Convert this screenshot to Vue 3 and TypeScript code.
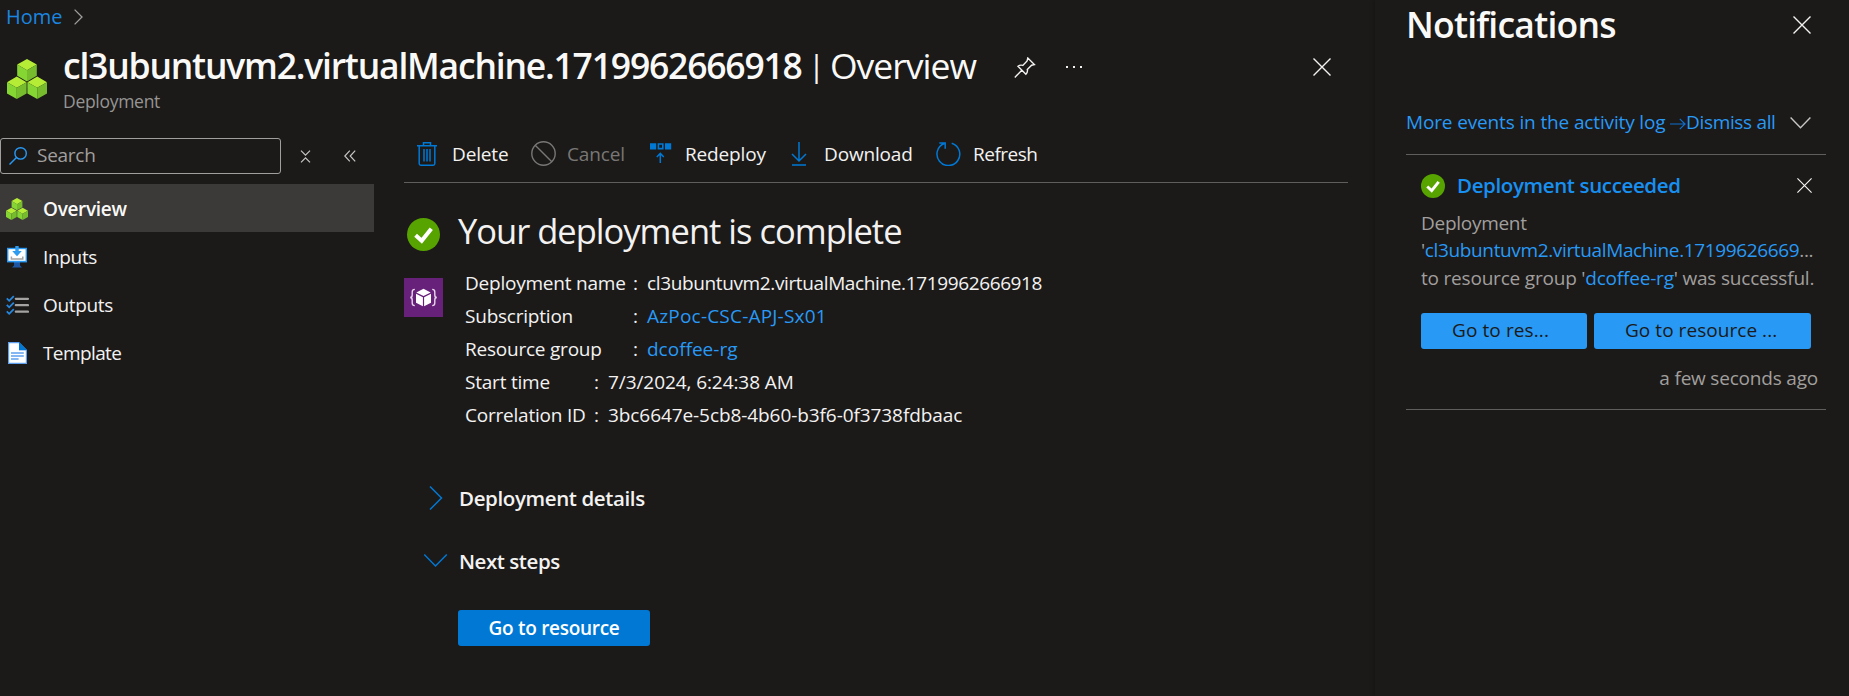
<script setup lang="ts">
interface MenuItem { id: string; label: string }
interface Command { id: string; label: string; disabled?: boolean }
interface Detail { id: string; label: string; value: string; link?: boolean }

const menu: MenuItem[] = [
  { id: 'overview', label: 'Overview' },
  { id: 'inputs', label: 'Inputs' },
  { id: 'outputs', label: 'Outputs' },
  { id: 'template', label: 'Template' },
]
const commands: Command[] = [
  { id: 'delete', label: 'Delete' },
  { id: 'cancel', label: 'Cancel', disabled: true },
  { id: 'redeploy', label: 'Redeploy' },
  { id: 'download', label: 'Download' },
  { id: 'refresh', label: 'Refresh' },
]
const wideDetails: Detail[] = [
  { id: 'name', label: 'Deployment name', value: 'cl3ubuntuvm2.virtualMachine.1719962666918' },
  { id: 'subscription', label: 'Subscription', value: 'AzPoc-CSC-APJ-Sx01', link: true },
  { id: 'group', label: 'Resource group', value: 'dcoffee-rg', link: true },
]
const narrowDetails: Detail[] = [
  { id: 'start', label: 'Start time', value: '7/3/2024, 6:24:38 AM' },
  { id: 'correlation', label: 'Correlation ID', value: '3bc6647e-5cb8-4b60-b3f6-0f3738fdbaac' },
]
</script>

<template>
  <div class="page">
    <svg class="defs" width="0" height="0" aria-hidden="true">
      <symbol id="cubes" viewBox="0 0 40 40">
        <g id="cube-one">
          <path d="M20 0 29.8 5.6 20 11.2 10.2 5.6Z" fill="#b4ec36" />
          <path d="M10.2 5.6 20 11.2V22.4L10.2 16.8Z" fill="#86d633" />
          <path d="M29.8 5.6 20 11.2V22.4L29.8 16.8Z" fill="#76bc2d" />
        </g>
        <use href="#cube-one" x="-10.2" y="17.6" />
        <use href="#cube-one" x="10.2" y="17.6" />
      </symbol>
      <symbol id="check" viewBox="0 0 33 33">
        <circle cx="16.5" cy="16.5" r="16.5" fill="#57a300" />
        <path d="M8.6 17.2 14.7 22.8 24.3 10.8" fill="none" stroke="#fff" stroke-width="4" />
      </symbol>
      <symbol id="cross" viewBox="0 0 18 18">
        <path d="M.5.5 17.5 17.5M17.5.5.5 17.5" fill="none" stroke="#f3f2f1" stroke-width="1.4" />
      </symbol>
    </svg>

    <div class="blade">
      <nav class="crumbs">
        <a>Home</a>
        <svg width="9" height="16" viewBox="0 0 9 16" fill="none" stroke="#a19f9d" stroke-width="1.3"><path d="M.6.6 8 8 .6 15.4" /></svg>
      </nav>

      <header class="head">
        <svg class="logo" width="40" height="40"><use href="#cubes" /></svg>
        <div class="titles">
          <div class="title-row">
            <h1><b>cl3ubuntuvm2.virtualMachine.1719962666918</b><i class="bar">|</i><span>Overview</span></h1>
            <svg class="pin" width="22" height="22" viewBox="0 0 22 22" fill="none" stroke="#f3f2f1" stroke-width="1.4">
              <path d="M13.8 1 20.4 7.6 17.6 8.2 13.3 12.5C13.8 14.4 13.2 16 11.9 17.2L4 9.3C5.6 8 7.2 7.9 8.8 8.4L13.1 4ZM7.8 13.2.8 20.4" />
            </svg>
            <svg class="dots" width="16" height="4" viewBox="0 0 16 4" fill="#f3f2f1"><rect y="1" width="2" height="2" /><rect x="7" y="1" width="2" height="2" /><rect x="14" y="1" width="2" height="2" /></svg>
          </div>
          <p class="subtitle">Deployment</p>
        </div>
        <svg class="close" width="18" height="18"><use href="#cross" /></svg>
      </header>

      <div class="columns">
        <aside class="side">
          <div class="search-row">
            <div class="search">
              <svg width="18" height="18" viewBox="0 0 18 18" fill="none" stroke="#2899f5" stroke-width="1.4"><circle cx="11.6" cy="6.4" r="5.7" /><path d="M7.5 10.5.5 17.5" /></svg>
              <span>Search</span>
            </div>
            <svg class="fold" width="11" height="13" viewBox="0 0 11 13" fill="none" stroke="#c8c6c4" stroke-width="1.2"><path d="M1 .6 5.5 5.1 10 .6M1 12.4 5.5 7.9 10 12.4" /></svg>
            <svg class="hide" width="12" height="12" viewBox="0 0 12 12" fill="none" stroke="#c8c6c4" stroke-width="1.2"><path d="M5.8.6.8 6 5.8 11.4M11.2.6 6.2 6 11.2 11.4" /></svg>
          </div>
          <ul class="menu">
            <li v-for="item in menu" :key="item.id" :class="item.id">
              <svg v-if="item.id === 'overview'" width="22" height="22"><use href="#cubes" /></svg>
              <svg v-else-if="item.id === 'inputs'" width="22" height="22" viewBox="0 0 22 22">
                <path d="M8 16H14V19.5L16 21.5H6L8 19.5Z" fill="#1f56a3" />
                <rect x="1" y="1.8" width="20" height="14.6" fill="#2899f5" />
                <rect x="2.4" y="3.2" width="17.2" height="11.6" fill="#fff" />
                <path d="M9.3 0H12.7V5H15.8L11 10.3 6.2 5H9.3Z" fill="#2d9bf0" />
                <path d="M5.4 10.5V13H16.8V10.5" fill="none" stroke="#a3a3a3" stroke-width="1.5" />
              </svg>
              <svg v-else-if="item.id === 'outputs'" width="23" height="22" viewBox="0 0 23 22" fill="none">
                <path d="M.8 4.4 3.2 6.8 7.8 2.2M.8 10.9 3.2 13.3 7.8 8.7M.8 17.4 3.2 19.8 7.8 15.2" stroke="#2588e0" stroke-width="1.8" />
                <path d="M9.8 4.8H22M9.8 11.2H22M9.8 17.7H22" stroke="#a5a3a1" stroke-width="2.2" stroke-linecap="round" />
              </svg>
              <svg v-else width="22" height="22" viewBox="0 0 22 22">
                <path d="M2 0H13L21 8V22H2Z" fill="#5ea0ef" />
                <path d="M3.2 1.2H13V8.6H19.8V20.8H3.2Z" fill="#fff" />
                <path d="M13 0 20.8 8H13Z" fill="#0078d4" />
                <path d="M5 11H17.8M5 14H17.8M5 17H12.6" stroke="#5ea0ef" stroke-width="1.6" />
              </svg>
              <span>{{ item.label }}</span>
            </li>
          </ul>
        </aside>

        <main class="content">
          <div class="toolbar">
            <div v-for="cmd in commands" :key="cmd.id" class="cmd" :class="[cmd.id, { disabled: cmd.disabled }]">
              <svg v-if="cmd.id === 'delete'" width="20" height="24" viewBox="0 0 20 24" fill="none" stroke="#0078d4" stroke-width="1.5"><path d="M0 3.8H20M6.5 3.5V.8H13.5V3.5M2.2 4V21.5Q2.2 23.2 3.8 23.2H16.2Q17.8 23.2 17.8 21.5V4M7 7V19.5M10 7V19.5M13 7V19.5" /></svg>
              <svg v-else-if="cmd.id === 'cancel'" width="25" height="25" viewBox="0 0 25 25" fill="none" stroke="#797775" stroke-width="1.4"><circle cx="12.5" cy="12.5" r="11.7" /><path d="M4.2 4.2 20.8 20.8" /></svg>
              <svg v-else-if="cmd.id === 'redeploy'" width="22" height="24" viewBox="0 0 22 24" fill="none" stroke="#0078d4" stroke-width="1.5"><path d="M0 1.2H6.2V7.4H0ZM15 1.2H21.2V7.4H15Z" fill="#0078d4" stroke="none" /><path d="M8.4 2H12.8V6.6H8.4Z" stroke-width="1.6" /><path d="M10.3 21V12M6.8 15 10.3 11.4 13.8 15" /></svg>
              <svg v-else-if="cmd.id === 'download'" width="16" height="24" viewBox="0 0 16 24" fill="none" stroke="#0078d4" stroke-width="1.5"><path d="M8 0V19M1 12 8 19 15 12M1 23H15" /></svg>
              <svg v-else width="25" height="24" viewBox="0 0 25 24" fill="none" stroke="#0078d4" stroke-width="1.5"><path d="M15.7 1.2A11.4 11.4 0 1 1 8.2 1.5M3.3.9H9.2V6.8" /></svg>
              <span>{{ cmd.label }}</span>
            </div>
          </div>

          <div class="status">
            <svg width="33" height="33"><use href="#check" /></svg>
            <h2>Your deployment is complete</h2>
          </div>

          <div class="summary">
            <svg width="39" height="39" viewBox="0 0 39 39">
              <rect width="39" height="39" fill="#68217a" />
              <path d="M19.5 10.8 26.7 14.4 19.5 18 12.3 14.4ZM12 15.8 18.9 19.2V28.2L12 24.8ZM27 15.8 20.1 19.2V28.2L27 24.8Z" fill="#fff" />
              <path d="M10.8 11.4Q8.2 11.4 8.2 14V17Q8.2 19.5 6.2 19.5 8.2 19.5 8.2 22V25Q8.2 27.6 10.8 27.6M28.2 11.4Q30.8 11.4 30.8 14V17Q30.8 19.5 32.8 19.5 30.8 19.5 30.8 22V25Q30.8 27.6 28.2 27.6" fill="none" stroke="#e6d6ea" stroke-width="1.4" />
            </svg>
            <div>
              <dl class="wide">
                <div v-for="d in wideDetails" :key="d.id" :class="d.id"><dt>{{ d.label }}</dt><i>:</i><dd :class="{ link: d.link }">{{ d.value }}</dd></div>
              </dl>
              <dl class="narrow">
                <div v-for="d in narrowDetails" :key="d.id" :class="d.id"><dt>{{ d.label }}</dt><i>:</i><dd>{{ d.value }}</dd></div>
              </dl>
            </div>
          </div>

          <section class="fold-row details">
            <svg width="24" height="24" viewBox="0 0 24 24" fill="none" stroke="#0078d4" stroke-width="1.5"><path d="M6 .5 17.5 12 6 23.5" /></svg>
            <h3>Deployment details</h3>
          </section>
          <section class="fold-row next">
            <svg width="24" height="24" viewBox="0 0 24 24" fill="none" stroke="#0078d4" stroke-width="1.5"><path d="M.2 5.5 11.5 17 22.8 5.5" /></svg>
            <h3>Next steps</h3>
          </section>
          <button class="primary">Go to resource</button>
        </main>
      </div>
    </div>

    <aside class="panel">
      <header class="panel-head">
        <h2>Notifications</h2>
        <svg width="18" height="18"><use href="#cross" /></svg>
      </header>
      <div class="actions">
        <a class="more">More events in the activity log</a>
        <svg class="arrow" width="16" height="12" viewBox="0 0 16 12" fill="none" stroke="#0f6fd0" stroke-width="1.2"><path d="M0 6H15M9.8.8 15 6 9.8 11.2" /></svg>
        <a class="dismiss">Dismiss all</a>
        <svg class="chevron" width="21" height="12" viewBox="0 0 21 12" fill="none" stroke="#c8c6c4" stroke-width="1.4"><path d="M.6.6 10.5 10.8 20.4.6" /></svg>
      </div>
      <article class="note">
        <div class="note-head">
          <svg width="24" height="24"><use href="#check" /></svg>
          <h4>Deployment succeeded</h4>
          <svg class="x" width="15" height="15" viewBox="0 0 18 18"><use href="#cross" /></svg>
        </div>
        <p class="l1">Deployment</p>
        <p class="l2">'<a>cl3ubuntuvm2.virtualMachine.17199626669</a>...</p>
        <p class="l3">to resource group '<a>dcoffee-rg</a>' was successful.</p>
        <div class="note-buttons">
          <button class="short">Go to res...</button>
          <button class="long">Go to resource ...</button>
        </div>
        <time>a few seconds ago</time>
      </article>
    </aside>
  </div>
</template>

<style>
html, body { background: #1b1a19; }
</style>

<style scoped>
* { box-sizing: border-box; margin: 0; padding: 0; }
.page { display: flex; width: 1849px; height: 696px; overflow: hidden; background: #1b1a19; color: #f3f2f1; font: 400 19px/27px "Open Sans", "Noto Sans", sans-serif; white-space: nowrap; }
.defs { position: absolute; }
svg { display: block; flex: none; }
.blade { width: 1375px; flex: none; }
.crumbs { display: flex; align-items: center; gap: 11px; height: 33px; padding-left: 6px; }
.crumbs a { color: #1a86e0; font-size: 20px; }
.crumbs svg { margin-top: 1px; }

.head { display: flex; height: 105px; padding-left: 7px; }
.logo { margin-top: 26px; }
.titles { width: 1266px; flex: none; padding-left: 16px; }
.title-row { display: flex; height: 56px; padding-top: 8px; }
h1 { display: flex; font-size: 35.5px; line-height: 49px; font-weight: 400; color: #faf9f8; }
h1 b { width: 745px; font-weight: 600; letter-spacing: -1.21px; }
h1 .bar { width: 22px; font-style: normal; font-size: 31px; line-height: 48px; }
h1 span { width: 184px; letter-spacing: -1px; }
.pin { margin-top: 16px; }
.dots { margin: 24px 0 0 30px; }
.subtitle { margin-top: -1px; font-size: 17.5px; color: #979593; letter-spacing: -.29px; }
.close { margin: 25px 0 0 0; }

.columns { display: flex; }
.side { width: 374px; }
.search-row { display: flex; align-items: center; height: 36px; margin-bottom: 10px; }
.search { display: flex; align-items: center; gap: 10px; width: 281px; height: 36px; padding-left: 8px; border: 1px solid #a19f9d; border-radius: 3px; color: #a19f9d; letter-spacing: -.26px; }
.search span { margin-top: -2px; }
.fold { margin-left: 19px; }
.hide { margin-left: 33px; }
.menu { list-style: none; }
.menu li { display: flex; align-items: center; height: 48px; padding-left: 6px; letter-spacing: -.34px; }
.menu svg { margin-top: 2px; }
.menu span { margin: 2px 0 0 15px; }
.menu .outputs span { margin-left: 14px; }
.menu .template span { letter-spacing: -.6px; }
.menu .overview { background: #3b3a39; font-weight: 600; color: #faf9f8; letter-spacing: -.32px; }

.content { width: 944px; margin-left: 30px; }
.toolbar { display: flex; align-items: center; height: 45px; padding-bottom: 13px; border-bottom: 1px solid #605e5c; }
.cmd { display: flex; align-items: center; letter-spacing: -.16px; }
.cmd span { margin-top: 1px; }
.delete { margin-left: 13px; width: 114px; gap: 15px; }
.cancel { width: 119px; gap: 11px; }
.redeploy { width: 141px; gap: 13px; }
.download { width: 145px; gap: 17px; }
.refresh { gap: 12px; letter-spacing: -.5px; }
.disabled { color: #797775; }

.status { display: flex; align-items: center; height: 60px; margin-top: 18px; padding-left: 3px; }
.status svg { margin-top: 6px; }
.status h2 { margin: 0 0 0 18px; font-size: 34.5px; line-height: 48px; font-weight: 400; letter-spacing: -1px; }

.summary { display: flex; margin-top: 6px; }
.summary > svg { margin-top: 11px; }
.summary > div { padding-left: 22px; }
dl div { display: flex; height: 33px; line-height: 33px; letter-spacing: -.22px; }
dl i { width: 14px; font-style: normal; }
.wide dt { width: 168px; }
.narrow dt { width: 129px; }
.name dd { letter-spacing: -.37px; }
.subscription dd { letter-spacing: .2px; }
.group dd { letter-spacing: 0; }
.start dd, .correlation dd { letter-spacing: -.08px; }
.link, .panel a { color: #2899f5; }

.fold-row { display: flex; align-items: center; height: 40px; padding-left: 20px; }
.fold-row h3 { margin-left: 11px; font-size: 20.5px; font-weight: 600; letter-spacing: -.38px; }
.details { margin-top: 46px; }
.next { margin-top: 23px; }
.next h3 { letter-spacing: -.45px; margin-top: 1px; }
.primary { display: block; width: 192px; height: 36px; margin: 29px 0 0 54px; border: 0; border-radius: 3px; background: #0078d4; color: #fff; font: 600 19px/35px "Open Sans", "Noto Sans", sans-serif; letter-spacing: -.29px; }

.panel { width: 474px; padding-left: 31px; box-shadow: 0 0 5px #0005; }
.panel-head { display: flex; justify-content: space-between; width: 405px; height: 46px; }
.panel-head h2 { font-size: 35.5px; line-height: 48px; font-weight: 600; letter-spacing: -.78px; color: #faf9f8; }
.panel-head svg { margin-top: 16px; }
.actions { display: flex; align-items: center; width: 420px; height: 109px; padding-top: 44px; border-bottom: 1px solid #605e5c; }
.more { width: 264px; letter-spacing: -.14px; }
.arrow { margin-top: 4px; }
.dismiss { width: 104px; letter-spacing: -.33px; }
.chevron { margin-top: 1px; }
.note { width: 420px; height: 255px; padding: 18px 8px 0 15px; border-bottom: 1px solid #605e5c; color: #a19f9d; }
.note-head { display: flex; align-items: center; height: 27px; }
.note-head > svg { margin-top: -2px; }
.note-head h4 { width: 340px; margin: -2px 0 0 12px; font-size: 20.5px; font-weight: 600; color: #1890f1; letter-spacing: -.37px; }
.note-head .x { margin-top: -3px; }
.note p { height: 27.3px; }
.l1 { margin-top: 10px; letter-spacing: -.28px; }
.l2 { letter-spacing: -.36px; }
.l3 { letter-spacing: -.2px; }
.note-buttons { display: flex; gap: 7px; margin-top: 21px; }
.note-buttons button { height: 36px; border: 0; border-radius: 3px; background: #2899f5; color: #1b1a19; padding: 0 0 0 31px; text-align: left; font: 400 19px/33px "Open Sans", "Noto Sans", sans-serif; }
.short { width: 166px; letter-spacing: .1px; }
.long { width: 217px; letter-spacing: .05px; }
time { display: block; margin-top: 16px; text-align: right; letter-spacing: -.2px; }
</style>
